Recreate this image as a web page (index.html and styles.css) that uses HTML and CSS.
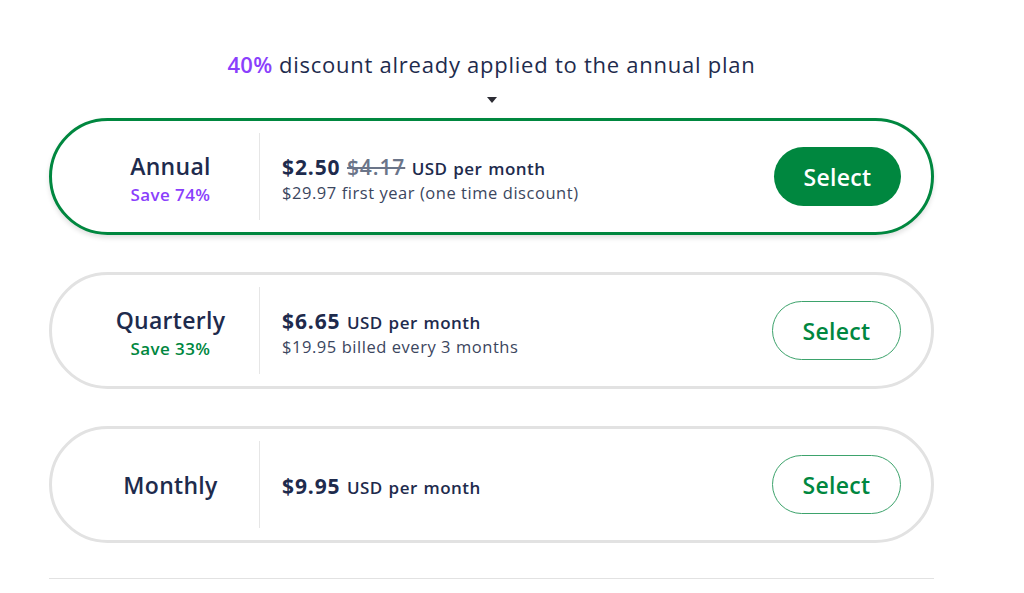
FILE: index.html
```html
<!DOCTYPE html>
<html lang="en">
<head>
<meta charset="utf-8">
<title>Plans</title>
<link rel="stylesheet" href="styles.css">
</head>
<body>
<main class="plans">
  <p class="promo"><span class="promo-pct">40%</span> discount already applied to the annual plan</p>
  <div class="caret-row"><span class="caret"></span></div>

  <div class="card card-active">
    <div class="plan-name">
      <div class="plan-title">Annual</div>
      <div class="plan-save save-purple">Save 74%</div>
    </div>
    <div class="divider"></div>
    <div class="plan-price">
      <div class="price-line"><span class="price">$2.50</span> <s class="old">$4.17</s> <span class="unit">USD per month</span></div>
      <div class="price-sub">$29.97 first year (one time discount)</div>
    </div>
    <button class="btn btn-filled">Select</button>
  </div>

  <div class="card">
    <div class="plan-name">
      <div class="plan-title">Quarterly</div>
      <div class="plan-save save-green">Save 33%</div>
    </div>
    <div class="divider"></div>
    <div class="plan-price">
      <div class="price-line"><span class="price">$6.65</span> <span class="unit">USD per month</span></div>
      <div class="price-sub">$19.95 billed every 3 months</div>
    </div>
    <button class="btn btn-outline">Select</button>
  </div>

  <div class="card card-last">
    <div class="plan-name plan-name-single">
      <div class="plan-title">Monthly</div>
    </div>
    <div class="divider"></div>
    <div class="plan-price">
      <div class="price-line"><span class="price">$9.95</span> <span class="unit">USD per month</span></div>
    </div>
    <button class="btn btn-outline">Select</button>
  </div>

  <hr class="rule">
</main>
</body>
</html>
```

FILE: styles.css
```css
* { box-sizing: border-box; }
html, body { margin: 0; padding: 0; background: #fff; }
body {
  font-family: "Open Sans", "Noto Sans", sans-serif;
  color: #1e2b4d;
}
.plans {
  width: 885px;
  margin-left: 49px;
  padding-top: 48px;
}
.promo {
  margin: 0;
  text-align: center;
  font-size: 22px;
  line-height: 32px;
  letter-spacing: 0.75px;
  color: #1e2b4d;
}
.promo-pct { color: #8a3ffc; font-weight: 600; letter-spacing: 0.3px; }
.caret-row {
  display: flex;
  justify-content: center;
  height: 38px;
  padding-top: 17px;
  padding-left: 1px;
}
.caret {
  width: 0; height: 0;
  border-left: 5px solid transparent;
  border-right: 5px solid transparent;
  border-top: 6px solid #2c2c34;
}
.card {
  height: 117px;
  border: 3px solid #e2e2e2;
  border-radius: 60px;
  display: flex;
  align-items: center;
  padding: 12px 30px 12px 30px;
  margin-bottom: 37px;
  background: #fff;
}
.card-last { margin-bottom: 35px; }
.card-active {
  border-color: #00873f;
  box-shadow: 0 3px 5px rgba(0,0,0,0.12);
}
.plan-name {
  width: 177px;
  text-align: center;
  padding-top: 6px;
}
.plan-name-single { padding-top: 0; }
.plan-title {
  font-size: 23px;
  line-height: 28px;
  font-weight: 600;
  letter-spacing: 0.3px;
  color: #1e2b4d;
}
.plan-save {
  margin-top: 3px;
  font-size: 17px;
  line-height: 24px;
  font-weight: 600;
  letter-spacing: 0.4px;
}
.save-purple { color: #8a3ffc; }
.save-green { color: #00873f; }
.divider {
  width: 1px;
  align-self: stretch;
  background: #e6e6e6;
}
.plan-price {
  flex: 1;
  padding-left: 22px;
  padding-top: 4px;
}
.price-line {
  font-size: 17px;
  line-height: 26px;
  color: #1e2b4d;
  font-weight: 600;
  word-spacing: 2px;
}
.price { font-size: 21px; font-weight: 700; letter-spacing: 0.9px; }
.old { font-size: 21px; font-weight: 600; color: #6b7589; letter-spacing: 0.9px; text-decoration-thickness: 2px; }
.unit { font-size: 17px; font-weight: 600; letter-spacing: 0.45px; word-spacing: 1px; }
.price-sub {
  font-size: 16.5px;
  line-height: 22px;
  letter-spacing: 0.55px;
  color: #3b465e;
}
.btn {
  font-family: "Open Sans", "Noto Sans", sans-serif;
  height: 59px;
  border-radius: 30px;
  font-size: 23px;
  font-weight: 600;
  letter-spacing: 0.3px;
  cursor: pointer;
  padding: 0;
}
.btn-filled {
  width: 127px;
  background: #00873f;
  color: #fff;
  border: none;
}
.btn-outline {
  width: 129px;
  background: #fff;
  color: #00873f;
  border: 1px solid #3da36c;
}
.rule {
  border: none;
  border-top: 1px solid #e2e2e2;
  margin: 0;
}
```
